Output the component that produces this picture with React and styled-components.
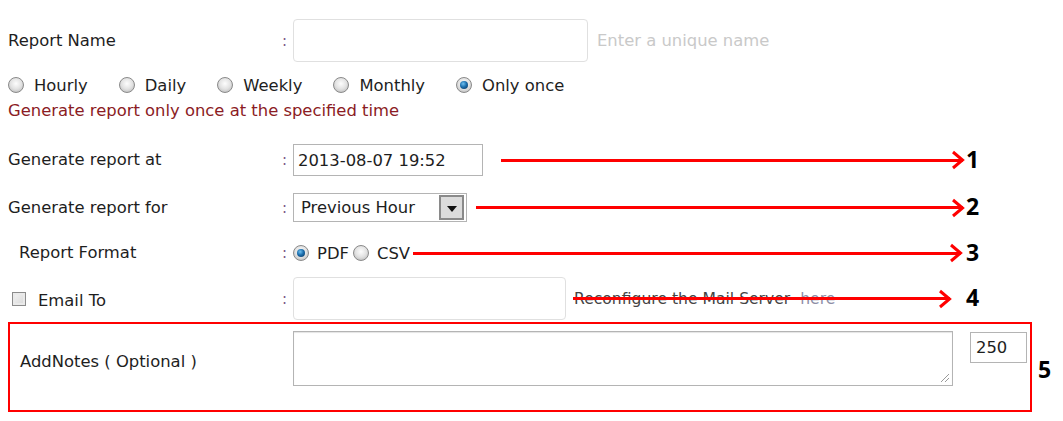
import React from "react";
import styled, { createGlobalStyle } from "styled-components";

const GlobalStyle = createGlobalStyle`
  body {
    margin: 0;
    background: #fff;
    font-family: "DejaVu Sans", Verdana, sans-serif;
    font-size: 16.4px;
    color: #1e1e1e;
  }
`;

const Page = styled.div`
  width: 1063px;
  height: 421px;
  padding: 19px 0 0 8px;
  box-sizing: border-box;
  overflow: hidden;
`;

const Row = styled.div`
  display: flex;
  align-items: center;
  width: 974px;
  height: ${(p) => p.h}px;
  margin-top: ${(p) => p.mt || 0}px;
`;

const Label = styled.div`
  width: ${(p) => 274 - (p.indent || 0)}px;
  padding-left: ${(p) => p.indent || 0}px;
  display: flex;
  align-items: center;
  gap: 12px;
  line-height: 18px;
  margin-top: ${(p) => p.dy || 0}px;
`;

const Colon = styled.span`
  width: 11px;
  color: #7d5a86;
  font-size: 15px;
`;

const TextBox = styled.div`
  box-sizing: border-box;
  width: ${(p) => p.w}px;
  height: ${(p) => p.h}px;
  border: 1px solid ${(p) => (p.soft ? "#e0e0e0" : "#b4b4b4")};
  border-radius: ${(p) => (p.soft ? 4 : 0)}px;
  background: #fff;
  display: flex;
  align-items: center;
  padding-left: 4px;
  color: #1e1e1e;
`;

const Hint = styled.span`
  margin-left: 9px;
  color: #c9c9c9;
`;

const RadioRow = styled.div`
  display: flex;
  align-items: center;
  height: 20px;
  margin-top: 13px;
`;

const RadioItem = styled.label`
  display: flex;
  align-items: center;
  gap: ${(p) => p.gap || 10}px;
  margin-right: ${(p) => p.mr || 0}px;
`;

const Radio = styled.span`
  box-sizing: border-box;
  width: 16px;
  height: 16px;
  border-radius: 50%;
  border: 1px solid #8a8a8a;
  background: radial-gradient(circle at 50% 40%, #fdfdfd 0%, #e2e2e2 50%, #b0b0b0 100%);
  display: flex;
  align-items: center;
  justify-content: center;
  flex: none;

  &::after {
    content: "";
    display: ${(p) => (p.checked ? "block" : "none")};
    width: 8px;
    height: 8px;
    border-radius: 50%;
    background: radial-gradient(circle at 40% 35%, #6fc0f0 0%, #1c6fae 45%, #0b2f55 100%);
  }
`;

const Note = styled.div`
  margin-top: 7px;
  line-height: 18px;
  color: #8b1c24;
`;

const Select = styled.div`
  box-sizing: border-box;
  width: 174px;
  height: 29px;
  border: 1px solid #b4b4b4;
  display: flex;
  align-items: center;
  justify-content: space-between;
  padding: 0 2px 0 7px;
  background: #fff;
`;

const DropBtn = styled.span`
  box-sizing: border-box;
  width: 25px;
  height: 25px;
  border: 2px solid #8a8a8a;
  background: #dcdcdc;
  display: flex;
  align-items: center;
  justify-content: center;

  &::after {
    content: "";
    border-left: 5px solid transparent;
    border-right: 5px solid transparent;
    border-top: 6px solid #111;
    margin-top: 2px;
  }
`;

const Arrow = styled.div`
  flex: 1;
  display: flex;
  align-items: center;
  margin-left: ${(p) => p.ml || 0}px;
  height: 20px;
`;

const Shaft = styled.div`
  flex: 1;
  height: 3px;
  background: #ff0000;
`;

const Head = () => (
  <svg width="14" height="20" viewBox="0 0 14 20" style={{ marginLeft: -12, flex: "none" }}>
    <polyline points="2,2 11.5,10 2,18" fill="none" stroke="#ff0000" strokeWidth="3" />
  </svg>
);

const Num = styled.span`
  width: 16px;
  margin-left: ${(p) => p.ml || 1}px;
  margin-top: ${(p) => p.dy || -3}px;
  font-family: "Open Sans", "Liberation Sans", sans-serif;
  font-weight: 700;
  font-size: 23px;
  line-height: 24px;
  color: #000;
`;

const Check = styled.span`
  box-sizing: border-box;
  width: 14px;
  height: 14px;
  margin-left: 4px;
  margin-top: -5px;
  border: 1px solid #8c8c8c;
  background: linear-gradient(135deg, #f4f4f4 0%, #d8d8d8 100%);
  box-shadow: inset 0 0 0 2px #eaeaea;
  flex: none;
`;

const MailNote = styled.div`
  position: relative;
  flex: 1;
  display: flex;
  align-items: center;
  height: 20px;
  padding-left: 8px;
  white-space: pre;
  color: #444;
  font-size: 15.6px;
`;

const Here = styled.span`
  color: #8e8ea6;
`;

const Overlay = styled.div`
  position: absolute;
  left: 7px;
  right: 0;
  top: 0;
  bottom: 0;
  display: flex;
  align-items: center;
`;

const NotesRow = styled.div`
  display: flex;
  align-items: center;
  margin-top: 2px;
`;

const NotesBox = styled.div`
  box-sizing: border-box;
  width: 1024px;
  height: 90px;
  border: 2px solid #ff0000;
  display: flex;
  align-items: flex-start;
  padding: 7px 0 0 10px;
`;

const TextArea = styled.div`
  position: relative;
  box-sizing: border-box;
  width: 660px;
  height: 55px;
  border: 1px solid #b4b4b4;
  box-shadow: inset 0 1px 1px #e4e4e4;
  background: #fff;
`;

const Grip = () => (
  <svg width="10" height="10" viewBox="0 0 10 10" style={{ position: "absolute", right: 2, bottom: 2 }}>
    <line x1="1" y1="9" x2="9" y2="1" stroke="#9a9a9a" strokeWidth="1" />
    <line x1="5" y1="9" x2="9" y2="5" stroke="#9a9a9a" strokeWidth="1" />
  </svg>
);

const Counter = styled(TextBox)`
  margin-left: 17px;
  margin-top: 1px;
  padding-left: 5px;
`;

export default function App() {
  return (
    <Page>
      <GlobalStyle />

      <Row h={43}>
        <Label>Report Name</Label>
        <Colon>:</Colon>
        <TextBox w={295} h={43} soft />
        <Hint>Enter a unique name</Hint>
      </Row>

      <RadioRow>
        <RadioItem mr={31}><Radio />Hourly</RadioItem>
        <RadioItem mr={31}><Radio />Daily</RadioItem>
        <RadioItem mr={31}><Radio />Weekly</RadioItem>
        <RadioItem mr={31}><Radio />Monthly</RadioItem>
        <RadioItem><Radio checked />Only once</RadioItem>
      </RadioRow>

      <Note>Generate report only once at the specified time</Note>

      <Row h={32} mt={24}>
        <Label>Generate report at</Label>
        <Colon>:</Colon>
        <TextBox w={190} h={32}>2013-08-07 19:52</TextBox>
        <Arrow ml={18}><Shaft /><Head /></Arrow>
        <Num>1</Num>
      </Row>

      <Row h={29} mt={17}>
        <Label>Generate report for</Label>
        <Colon>:</Colon>
        <Select>Previous Hour<DropBtn /></Select>
        <Arrow ml={9}><Shaft /><Head /></Arrow>
        <Num>2</Num>
      </Row>

      <Row h={20} mt={21}>
        <Label indent={11}>Report Format</Label>
        <Colon>:</Colon>
        <RadioItem gap={8} mr={4}><Radio checked />PDF</RadioItem>
        <RadioItem gap={8}><Radio />CSV</RadioItem>
        <Arrow ml={3}><Shaft /><Head /></Arrow>
        <Num ml={3}>3</Num>
      </Row>

      <Row h={43} mt={14}>
        <Label dy={5}><Check />Email To</Label>
        <Colon>:</Colon>
        <TextBox w={273} h={43} soft />
        <MailNote>
          Reconfigure the Mail Server  <Here>here</Here>
          <Overlay><Shaft /><Head /></Overlay>
        </MailNote>
        <Num ml={14}>4</Num>
      </Row>

      <NotesRow>
        <NotesBox>
          <Label indent={0} dy={22} style={{ width: 273 }}>AddNotes ( Optional )</Label>
          <TextArea><Grip /></TextArea>
          <Counter w={57} h={31}>250</Counter>
        </NotesBox>
        <Num ml={6} dy={4}>5</Num>
      </NotesRow>
    </Page>
  );
}
